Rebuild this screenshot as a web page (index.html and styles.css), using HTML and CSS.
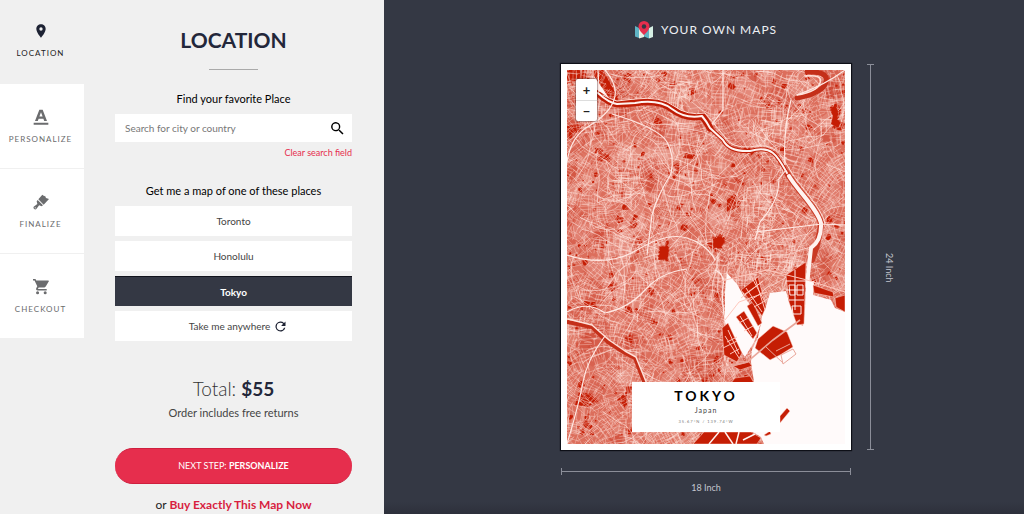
FILE: index.html
```html
<!DOCTYPE html>
<html lang="en">

<head>
    <meta charset="UTF-8">
    <meta name="viewport" content="width=device-width, initial-scale=1.0">
    <title>Your Own Maps</title>
    <link rel="stylesheet" href="styles.css">
</head>

<body>
    <div class="app">
        <nav class="steps">
            <a href="#location" class="step active">
                <svg viewBox="0 0 24 24"><path d="M12 2C8.100 2 5 5.100 5 9c0 5.200 7 13 7 13s7-7.800 7-13c0-3.900-3.100-7-7-7zm0 9.500a2.500 2.500 0 1 1 0-5 2.500 2.500 0 0 1 0 5z"/></svg>
                <span>LOCATION</span>
            </a>
            <a href="#personalize" class="step">
                <svg viewBox="0 0 24 24"><path d="M1 20.500h22v3H1zM9.500 1h5L21 18h-4.200l-1.200-3.500H8.400L7.200 18H3zm2.500 4L9.600 11.400h4.800z"/></svg>
                <span>PERSONALIZE</span>
            </a>
            <a href="#finalize" class="step">
                <svg viewBox="0 0 24 24"><path d="M14 1l3 2.500 1-1 1.500 3.500L24 7.500l-8 8.500L8 8zM7 9l8 8-2 1.500-3.800-1.500-4.200 5.500c-1.500 2-5.500-1-4-3.500l5.500-4L5.500 11z"/><circle cx="3.300" cy="20.700" r=".9" fill="#fff"/></svg>
                <span>FINALIZE</span>
            </a>
            <a href="#checkout" class="step">
                <svg viewBox="1 2 21 21"><path d="M7 18a2 2 0 1 0 0 4 2 2 0 0 0 0-4zM1 2v2h2l3.600 7.600-1.350 2.400C4.500 15.400 5.500 17 7 17h12v-2H7.400l1.100-2h7.450c.75 0 1.400-.4 1.750-1L22 4.500 21 4H5.200l-.9-2zm16 16a2 2 0 1 0 0 4 2 2 0 0 0 0-4z"/></svg>
                <span>CHECKOUT</span>
            </a>
        </nav>

        <main class="panel">
            <h1>LOCATION</h1>
            <hr>
            <form class="search">
                <label for="place">Find your favorite Place</label>
                <div class="search-box">
                    <input type="text" id="place" placeholder="Search for city or country">
                    <button type="submit" aria-label="Search">
                        <svg viewBox="0 0 24 24"><path d="M15.500 14h-.8l-.3-.3A6.500 6.500 0 1 0 13.700 14.400l.3.300v.8l5 5 1.500-1.500zm-6 0a4.500 4.500 0 1 1 0-9 4.500 4.500 0 0 1 0 9z"/></svg>
                    </button>
                </div>
                <a href="#clear" class="clear">Clear search field</a>
            </form>

            <h2>Get me a map of one of these places</h2>
            <div class="places">
                <button type="button">Toronto</button>
                <button type="button">Honolulu</button>
                <button type="button" class="selected">Tokyo</button>
                <button type="button" class="anywhere">Take me anywhere
                    <svg viewBox="0 0 24 24"><path d="M17.650 6.350A8 8 0 1 0 19.730 14h-2.080A6 6 0 1 1 12 6c1.660 0 3.140.69 4.220 1.780L13 11h7V4z"/></svg>
                </button>
            </div>

            <p class="total">Total: <b>$55</b></p>
            <p class="note">Order includes free returns</p>
            <button type="button" class="next">NEXT STEP: <b>PERSONALIZE</b></button>
            <p class="buy">or <a href="#buy">Buy Exactly This Map Now</a></p>
        </main>

        <section class="preview">
            <a href="#home" class="logo">
                <svg viewBox="0 0 18 18">
                    <path fill="#5fb4c4" d="M0 5l4 2v10l-4-1.500z"/>
                    <path fill="#e8f0e4" d="M4 7l5-2v11l-5 1.500z"/>
                    <path fill="#5fb4c4" d="M9 5l5 2v10.500L9 15.500z"/>
                    <path fill="#d5efe4" d="M14 7l4-2v11l-4 1.500z"/>
                    <path fill="#e62e4d" d="M9 0a5.500 5.500 0 0 0-5.500 5.500C3.500 9.500 9 14 9 14s5.500-4.500 5.500-8.500A5.500 5.500 0 0 0 9 0z"/>
                    <circle cx="9" cy="5.500" r="2.200" fill="#343844"/>
                </svg>
                <span>YOUR OWN MAPS</span>
            </a>

            <div class="stage">
                <div class="poster">
                    <div class="map">
                        <svg class="city" viewBox="0 0 278 374" preserveAspectRatio="xMidYMid slice">
                            <rect width="278" height="374" fill="#dc6e5c"/>
                            <g id="areas"></g>
                            <g id="parks" fill="#c51d04"></g>
                            <g fill="#c51d04">
                                <path d="M24 0h12l13 24 4 7-12-4-12-10zM0 0h20l-1 8-19 6z"/>
                                <path d="M92 176l8-1 3 4-2 12-10-1zM144 168l10-4 5 6-4 8-9 1z"/>
                                <path d="M160 130l7-6 8 5-3 8-12 5zM262 38l8-6 4 8-2 10 6 4-4 7-9-3 2-10z"/>
                                <path d="M0 56l12-4 6 3-8 8-10-1zM28 78l8 0-1 7-7-2zM16 231l12 1 2 6-12-2z"/>
                                <path d="M58 235l7 3 1 6-8-1zM12 322l14 2 6 7-12 6-12-2zM50 330l11-10-3 18zM119 83l10 2-2 4-11-1z"/>
                            </g>
                            <g id="streets" fill="none" stroke="#ffe5df"></g>
                            <!-- parks that are too big for streets -->
                            <path fill="#c51d04" d="M93 177l7-1 2 4-2 10-8-1zM146 169l8-3 4 5-4 6-7 1zM37 4l11 18-8-4zM264 39l4-4 3 6-1 8 4 4-4 4-6-3 2-8zM213 79l4-2v4h-4z"/>
                            <!-- flood plains and the rivers -->
                            <g fill="none" stroke-linejoin="round" stroke-linecap="round">
                                <path stroke="#bf1c05" stroke-width="7" d="M31 23Q42 33 50 34L68 33Q92 29 105 39T135 46Q140 52 143 58"/>
                                <path stroke="#bf1c05" stroke-width="4" d="M143 58L156 70Q162 82 183 81C205 75 210 85 220 103"/>
                                <path stroke="#c93a25" stroke-width="6" d="M220 103C228 118 250 138 254 153Q252 172 245 190"/>
                                <path stroke="#c42f19" stroke-width="5" d="M240 2Q262 1 259 12T230 28"/>
                                <path stroke="#c42f19" stroke-width="4" d="M1 252L25 257L41 272L58 283L68 288L78 314"/>
                                <path stroke="#ffe2da" stroke-width="1.500" d="M1 249L25 255L42 270L58 281L69 287L80 314M238 6Q256 4 253 13T230 25"/>
                                <path stroke="#fff4f1" stroke-width="2" d="M31 23Q42 33 50 34L68 33Q92 29 105 39T135 46Q140 52 143 58L156 70Q162 82 183 81C205 75 210 85 220 103"/>
                                <path stroke="#fff4f1" stroke-width="4" d="M222 106C230 120 250 138 254 153Q255 170 244 178L240 215"/>
                                <path stroke="#ffded6" stroke-width="1" d="M36 25Q43 29 50 31L68 29Q94 26 107 36T138 43L158 67Q164 78 183 77C208 72 213 83 223 100S254 136 258 153"/>
                                <path fill="#fff6f4" stroke="none" d="M27 6L42 28 29 19z"/>
                            </g>
                            <!-- expressways -->
                            <g fill="none" stroke="#ffe9e4" stroke-width="1.200">
                                <path d="M31 0l1 22M26 0v20M38 0q14 16 9 30T22 56Q4 66 0 92"/>
                                <path d="M45 44Q92 58 100 72T104 104Q90 126 85 145L80 185"/>
                                <path d="M156 0v40L145 54M219 100L211 110Q214 128 193 152L188 170"/>
                                <path d="M148 200Q158 204 156 216T158 250V290"/>
                                <path d="M0 185Q40 198 70 180T120 168T148 190M188 162L255 154l23 1"/>
                                <path d="M0 242Q20 230 38 243Q62 238 78 220T120 199"/>
                                <path d="M38 266Q20 290 16 312T0 374"/>
                                <path d="M224 30Q216 60 218 95M230 25Q258 15 278 0"/>
                            </g>
                            <!-- Tokyo bay -->
                            <path fill="#fffafa" d="M278 242L268 238 264 230 246 225 247 211 239 211 238 240 236 256 230 253 222 232 219 221 203 223 199 236 195 246 194 253 190 264 187 272 178 287 166 270 158 252 158 222 160 203 170 214 176 225 190 245 194 253 191 267 185 280 184 292 187 312 188 350 184 361 194 367 197 374H278z"/>
                            <g fill="#c51d04" stroke="#ffd8cf" stroke-width=".5">
                                <path d="M155 258l6-5 14 30-5 9-13-7z"/>
                                <path d="M169 247l8-6 13 22-4 6z"/>
                                <path d="M180 236l6-4 9 21-4 3z"/>
                                <path d="M174 220l17-13 8 30-4 9-11-15z"/>
                                <path d="M219 205l20-13-2 62-7 1-8-23z"/>
                                <path d="M246 215l20 7 1 5-20-4zM268 228l10-3v17l-9-5z"/>
                                <path d="M206 256l14 6 6 15-13 8-10 5-15-12 3-9z"/>
                                <path d="M166 296l16-4 3 4-12 4zM168 308l15-2 4 7h-23z"/>
                                <path d="M213 346l7-8 3 3-10 12zM197 365l6-4 1 3-5 2z"/>
                                <path d="M137 362h47l10 6-4 6h-64z"/>
                            </g>
                            <g fill="none" stroke="#ffc9be" stroke-width="1">
                                <path stroke="#eaa79b" stroke-width="1.600" d="M156 298L180 292 206 270 233 250"/>
                                <path stroke="#eaa79b" d="M214 285l12-6 3 5-13 10zM198 276l18 17M209 281l14-7"/>
                                <path d="M158 266l14 22M161 260l11 24M173 246l12 20M179 218l16 24M174 228l22-17M184 206l14 26M156 278l14-7"/>
                                <path d="M178 224l17-12M182 231l14-9M187 237l11-6M188 208l10 32M172 253l9-5M177 261l9-5M160 272l10-5M163 284l9-5"/>
                                <path stroke="#fff0ed" d="M219 220h18M222 230h15M219 211h20M228 200v40M222 215h6v10h-5zM230 215h6v10h-6zM225 236h9v8h-8z"/>
                                <path d="M150 212L200 200 240 210 278 222M158 250L172 232 200 222"/>
                                <path stroke="#fff0ed" stroke-width="1.500" d="M142 374l10-12M158 362l8 12M172 362l-3 12M176 370l12-6"/>
                            </g>
                        </svg>
                        <div class="zoom">
                            <button type="button" aria-label="Zoom in">+</button>
                            <button type="button" aria-label="Zoom out">−</button>
                        </div>
                        <div class="caption">
                            <strong>TOKYO</strong>
                            <span>Japan</span>
                            <small>35.67°N / 139.74°W</small>
                        </div>
                    </div>
                </div>
                <div class="size-y"><i></i><span>24 Inch</span></div>
                <div class="size-x"><i></i><span>18 Inch</span></div>
            </div>
        </section>
    </div>
    <script src="map.js"></script>
</body>

</html>
```

FILE: styles.css
```css
* {
    box-sizing: border-box;
}

body {
    margin: 0;
    font-family: Lato, "Open Sans", sans-serif;
    font-size: 10px;
    line-height: 14px;
    color: #222;
    background: #343844;
}

a {
    text-decoration: none;
}

button,
input {
    font: inherit;
    border: none;
    margin: 0;
    padding: 0;
}

button {
    cursor: pointer;
}

.app {
    display: grid;
    grid-template-columns: 84px minmax(300px, 29.3%) 1fr;
    min-height: 100vh;
    overflow: hidden;
}

/* left steps */
.steps {
    background: #f0f0f0;
}

.step {
    display: flex;
    flex-direction: column;
    align-items: center;
    justify-content: center;
    gap: 7px;
    height: 85px;
    padding: 2px 3px 0 0;
    background: #fff;
    border-bottom: 1px solid #f0f0f0;
    color: #6b6c6e;
    font-size: 8px;
    letter-spacing: 1px;
}

.step.active {
    height: 84px;
    padding-top: 0;
    background: #f0f0f0;
    color: #222;
}

.step svg {
    width: 16px;
    height: 16px;
    fill: #6b6c6e;
}

.step.active svg {
    fill: #1d2233;
}

/* settings */
.panel {
    display: flex;
    flex-direction: column;
    padding: 24px 32px 0 31px;
    background: #f0f0f0;
    text-align: center;
}

.panel h1 {
    margin: 0;
    font-size: 21px;
    line-height: 32px;
    color: #23273a;
}

.panel hr {
    width: 49px;
    margin: 13px auto 22px;
    border: none;
    border-top: 1px solid #aaa;
}

.search {
    display: flex;
    flex-direction: column;
}

.search label,
.panel h2 {
    margin: 0 0 8px;
    font-size: 11px;
    font-weight: normal;
    color: #000;
}

.search-box {
    display: flex;
    background: #fff;
    height: 28px;
}

.search-box input {
    flex: 1;
    min-width: 0;
    padding: 0 10px;
    background: none;
}

.search-box input::placeholder {
    color: #777;
}

.search-box button {
    width: 30px;
    background: none;
}

.search-box svg {
    display: block;
    width: 17px;
    height: 17px;
    margin: 0 auto;
}

.clear {
    align-self: flex-end;
    margin: 4px 0 24px;
    font-size: 9px;
    color: #e62e4d;
}

.places {
    display: flex;
    flex-direction: column;
    gap: 5px;
}

.places button {
    display: flex;
    align-items: center;
    justify-content: center;
    gap: 3px;
    height: 30px;
    background: #fff;
    color: #444;
}

.places .selected {
    background: #343844;
    border-top: 1px solid #11131c;
    color: #fff;
    font-weight: bold;
}

.places .anywhere {
    padding-left: 10px;
}

.places svg {
    width: 15px;
    height: 15px;
    fill: #1d2233;
}

.total {
    margin: 37px 0 6px;
    font-size: 19px;
    line-height: 22px;
    font-weight: 300;
    color: #333;
}

.total b {
    font-weight: 700;
    color: #23273a;
}

.note {
    margin: 0 0 28px;
    font-size: 11px;
    color: #444;
}

.next {
    height: 36px;
    border-radius: 18px;
    background: #e62e4d;
    border-top: 1px solid #cf1f3e;
    border-bottom: 1px solid #cf1f3e;
    color: #fff;
    font-size: 9px;
}

.buy {
    margin: 14px 0 0;
    font-size: 12px;
}

.buy a {
    color: #d81e40;
    font-weight: bold;
}

/* poster preview */
.preview {
    display: flex;
    flex-direction: column;
    align-items: center;
    padding: 20px 0 0 4px;
    background: linear-gradient(to top, #2d303b, #343844 12px);
}

.logo {
    display: flex;
    align-items: center;
    gap: 8px;
    margin-bottom: 24px;
    color: #eef0f4;
    font-size: 12px;
    line-height: 20px;
    letter-spacing: 1px;
}

.logo svg {
    width: 18px;
    height: 18px;
}

.stage {
    display: grid;
    grid-template-columns: 1fr auto 1fr;
    width: 100%;
    row-gap: 18px;
    color: #c3c6cf;
    font-size: 9px;
}

.poster {
    grid-column: 2;
    width: 290px;
    padding: 6px;
    background: #fff;
    box-shadow: 0 0 1px 1px #0d0f17;
}

.map {
    position: relative;
    aspect-ratio: 278 / 374;
}

.city {
    display: block;
    width: 100%;
    height: 100%;
}

.zoom {
    position: absolute;
    top: 9px;
    left: 9px;
    width: 21px;
    border-radius: 2px;
    background: #fff;
    box-shadow: 0 0 1px 1px rgba(80, 40, 40, 0.4);
}

.zoom button {
    display: block;
    width: 100%;
    height: 21px;
    background: none;
    color: #222;
    font-size: 13px;
    font-weight: bold;
}

.zoom button + button {
    border-top: 1px solid #ddd;
}

.caption {
    position: absolute;
    bottom: 12px;
    left: 65px;
    right: 65px;
    height: 50px;
    padding-top: 6px;
    display: flex;
    flex-direction: column;
    align-items: center;
    background: #fff;
    color: #444;
}

.caption strong {
    font-size: 14px;
    line-height: 16px;
    letter-spacing: 3px;
    color: #000;
}

.caption span {
    font-size: 7px;
    line-height: 13px;
    letter-spacing: 1px;
}

.caption small {
    font-size: 4px;
    line-height: 10px;
    letter-spacing: 1px;
    color: #777;
}

.size-y {
    display: flex;
    gap: 8px;
    margin-left: 16px;
}

.size-y i {
    width: 7px;
    border: solid #8b8e99;
    border-width: 1px 0;
    background: linear-gradient(#8b8e99, #8b8e99) center / 1px 100% no-repeat;
}

.size-y span {
    align-self: center;
    padding-top: 22px;
    writing-mode: vertical-rl;
}

.size-x {
    grid-column: 2;
    text-align: center;
}

.size-x i {
    display: block;
    height: 7px;
    margin-bottom: 6px;
    border: solid #8b8e99;
    border-width: 0 1px;
    background: linear-gradient(#8b8e99, #8b8e99) center / 100% 1px no-repeat;
}
```

FILE: map.js
```js
// small seeded random so the streets are always the same
let seed = 35;
function rnd() {
    seed = (seed * 16807) % 2147483647;
    return seed / 2147483647;
}

function addPath(parent, d, attrs) {
    const path = document.createElementNS("http://www.w3.org/2000/svg", "path");
    path.setAttribute("d", d);
    for (const key in attrs) {
        path.setAttribute(key, attrs[key]);
    }
    document.getElementById(parent).appendChild(path);
}

// random closed shape round a point
function blob(x, y, r) {
    let d = "";
    for (let k = 0; k < 6; k++) {
        const a = k * Math.PI / 3 + rnd() * 0.6;
        const l = r * (0.5 + rnd() * 0.7);
        d += `${k ? "L" : "M"}${x + Math.cos(a) * l} ${y + Math.sin(a) * l}`;
    }
    return d + "z";
}

// lighter and darker quarters
for (let i = 0; i < 420; i++) {
    addPath("areas", blob(rnd() * 278, rnd() * 374, 4 + rnd() * 13), {
        "fill": rnd() < 0.6 ? "#eba396" : "#c93823",
        "fill-opacity": 0.15 + rnd() * 0.3
    });
}

// dark blocks
let blocks = "";
for (let i = 0; i < 420; i++) {
    blocks += blob(rnd() * 278, rnd() * 374, 1 + rnd() * rnd() * 5);
}
addPath("parks", blocks, {});

// local street grids, each patch with its own direction and density
for (let gy = -6; gy < 382; gy += 12) {
    let fine = "";
    for (let gx = -6; gx < 286; gx += 12) {
        const angle = Math.sin(gx / 41 + gy / 67) + Math.cos(gy / 37) * 0.8 + rnd() * 0.9;
        const step = 2 + rnd() * 2.5;
        const skip = rnd() * 0.6;
        for (let k = -3; k <= 3; k++) {
            for (const a of [angle, angle + Math.PI / 2]) {
                if (rnd() < skip) continue;
                const len = 3 + rnd() * 6;
                const cx = gx + rnd() * 4 - Math.sin(a) * k * step;
                const cy = gy + rnd() * 4 + Math.cos(a) * k * step;
                const dx = Math.cos(a) * len;
                const dy = Math.sin(a) * len;
                fine += `M${cx - dx} ${cy - dy}L${cx + dx} ${cy + dy}`;
            }
        }
    }
    addPath("streets", fine, { "stroke-width": 0.7, "stroke-opacity": 0.5 });
}

// denser centre of the city and the north wards
let centre = "";
for (const [px, py, w, h, n] of [[190, 140, 26, 30, 60], [185, 185, 40, 30, 80], [112, 20, 22, 14, 30], [200, 45, 34, 24, 40], [55, 115, 26, 20, 30], [222, 195, 20, 20, 30]]) {
    for (let i = 0; i < n; i++) {
        const x = px + (rnd() + rnd() - 1) * w;
        const y = py + (rnd() + rnd() - 1) * h;
        const a = 0.1 + (rnd() < 0.5 ? Math.PI / 2 : 0);
        const l = 5 + rnd() * 12;
        centre += `M${x} ${y}l${Math.cos(a) * l} ${Math.sin(a) * l}`;
    }
}
addPath("streets", centre, { "stroke-width": 0.8, "stroke-opacity": 0.65 });

// main roads wander over the map
let roads = "";
for (let i = 0; i < 170; i++) {
    let x = rnd() * 278;
    let y = rnd() * 374;
    let a = rnd() * Math.PI * 2;
    roads += `M${x} ${y}`;
    for (let k = 0; k < 6; k++) {
        a += (rnd() - 0.5) * 0.8;
        x += Math.cos(a) * 9;
        y += Math.sin(a) * 9;
        roads += `L${x} ${y}`;
    }
}
addPath("streets", roads, { "stroke-width": 0.9, "stroke-opacity": 0.7, "stroke-linejoin": "round" });
```
